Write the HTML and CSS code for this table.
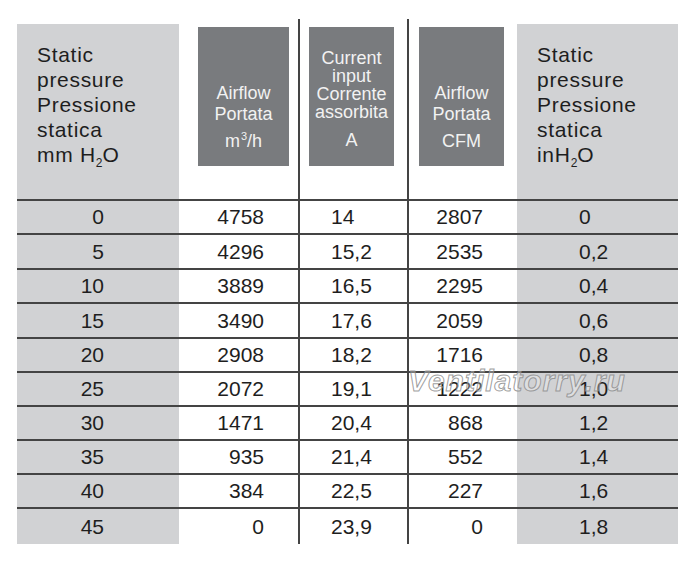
FILE: index.html
```html
<!DOCTYPE html>
<html lang="it">
<head>
<meta charset="utf-8">
<title>Fan performance table</title>
<link rel="stylesheet" href="styles.css">
</head>
<body>
<div class="sheet">
  <div class="grid">
    <div class="h h1"><div class="side-text">Static<br>pressure<br>Pressione<br>statica<br>mm H<sub>2</sub>O</div></div>
    <div class="h h2"><div class="box box-wide"><div class="lbl">Airflow<br>Portata</div><div class="unit">m<sup>3</sup>/h</div></div></div>
    <div class="h h3"><div class="box box-cur"><div class="lbl">Current<br>input<br>Corrente<br>assorbita</div><div class="unit">A</div></div></div>
    <div class="h h4"><div class="box box-cfm"><div class="lbl">Airflow<br>Portata</div><div class="unit">CFM</div></div></div>
    <div class="h h5"><div class="side-text">Static<br>pressure<br>Pressione<br>statica<br>inH<sub>2</sub>O</div></div>

    <div class="c c1">0</div><div class="c c2">4758</div><div class="c c3">14</div><div class="c c4">2807</div><div class="c c5">0</div>
    <div class="c c1">5</div><div class="c c2">4296</div><div class="c c3">15,2</div><div class="c c4">2535</div><div class="c c5">0,2</div>
    <div class="c c1">10</div><div class="c c2">3889</div><div class="c c3">16,5</div><div class="c c4">2295</div><div class="c c5">0,4</div>
    <div class="c c1">15</div><div class="c c2">3490</div><div class="c c3">17,6</div><div class="c c4">2059</div><div class="c c5">0,6</div>
    <div class="c c1">20</div><div class="c c2">2908</div><div class="c c3">18,2</div><div class="c c4">1716</div><div class="c c5">0,8</div>
    <div class="c c1">25</div><div class="c c2">2072</div><div class="c c3">19,1</div><div class="c c4">1222</div><div class="c c5">1,0</div>
    <div class="c c1">30</div><div class="c c2">1471</div><div class="c c3">20,4</div><div class="c c4">868</div><div class="c c5">1,2</div>
    <div class="c c1">35</div><div class="c c2">935</div><div class="c c3">21,4</div><div class="c c4">552</div><div class="c c5">1,4</div>
    <div class="c c1">40</div><div class="c c2">384</div><div class="c c3">22,5</div><div class="c c4">227</div><div class="c c5">1,6</div>
    <div class="c c1">45</div><div class="c c2">0</div><div class="c c3">23,9</div><div class="c c4">0</div><div class="c c5">1,8</div>
  </div>
  <div class="watermark">Ventilatorry.ru</div>
</div>
</body>
</html>
```
FILE: styles.css
```css
html, body {
  margin: 0;
  padding: 0;
  background: #ffffff;
}

body {
  font-family: "Liberation Sans", Arial, sans-serif;
  color: #222222;
}

.sheet {
  position: relative;
  width: 661px;
  padding: 19px 0 0 17px;
}

.grid {
  display: grid;
  grid-template-columns: 162px 119px 109px 110px 161px;
  grid-template-rows: 180px 34px 35px 34px 35px 34px 34px 34px 34px 34px 37px;
}

/* header cells */
.h {
  box-sizing: border-box;
}

.h1, .h5 {
  margin-top: 5px;
  background: #d1d2d4;
  padding: 18px 0 0 20px;
}

.side-text {
  font-size: 21px;
  line-height: 25px;
  letter-spacing: 0.7px;
  color: #1e1e1e;
}

.side-text sub {
  font-size: 12px;
  line-height: 0;
  vertical-align: -5px;
  letter-spacing: 0;
}

.h3, .h4 {
  border-left: 2px solid #444444;
}

.box {
  box-sizing: border-box;
  margin-top: 8px;
  height: 139px;
  background: #797b7e;
  color: #f2f2f2;
  text-align: center;
}

.box-wide {
  margin-left: 19px;
  width: 91px;
  padding-top: 56px;
  font-size: 18px;
  line-height: 21px;
}

.box-cfm {
  margin-left: 10px;
  width: 85px;
  padding-top: 56px;
  font-size: 18px;
  line-height: 21px;
}

.box-wide .unit, .box-cfm .unit {
  margin-top: 6px;
}

.box-cur {
  margin-left: 9px;
  width: 85px;
  padding-top: 22px;
  font-size: 18px;
  line-height: 18px;
}

.box-cur .unit {
  margin-top: 10px;
}

.unit sup {
  font-size: 11px;
  line-height: 0;
  vertical-align: 7px;
  margin-left: 1px;
}

/* data cells */
.c {
  box-sizing: border-box;
  border-top: 2px solid #444444;
  display: flex;
  align-items: center;
  font-size: 21px;
  color: #1e1e1e;
}

.c1 {
  background: #d1d2d4;
  justify-content: flex-end;
  padding-right: 75px;
}

.c2 {
  justify-content: flex-end;
  padding-right: 34px;
}

.c3 {
  border-left: 2px solid #444444;
  padding-left: 31px;
}

.c4 {
  border-left: 2px solid #444444;
  justify-content: flex-end;
  padding-right: 34px;
}

.c5 {
  background: #d1d2d4;
  padding-left: 62px;
}

/* watermark overlay */
.watermark {
  position: absolute;
  left: 408px;
  top: 366px;
  font-size: 30px;
  line-height: 30px;
  font-weight: bold;
  font-style: italic;
  letter-spacing: 1px;
  color: rgba(255, 255, 255, 0.3);
  -webkit-text-stroke: 1px rgba(140, 140, 140, 0.85);
  pointer-events: none;
}
```
